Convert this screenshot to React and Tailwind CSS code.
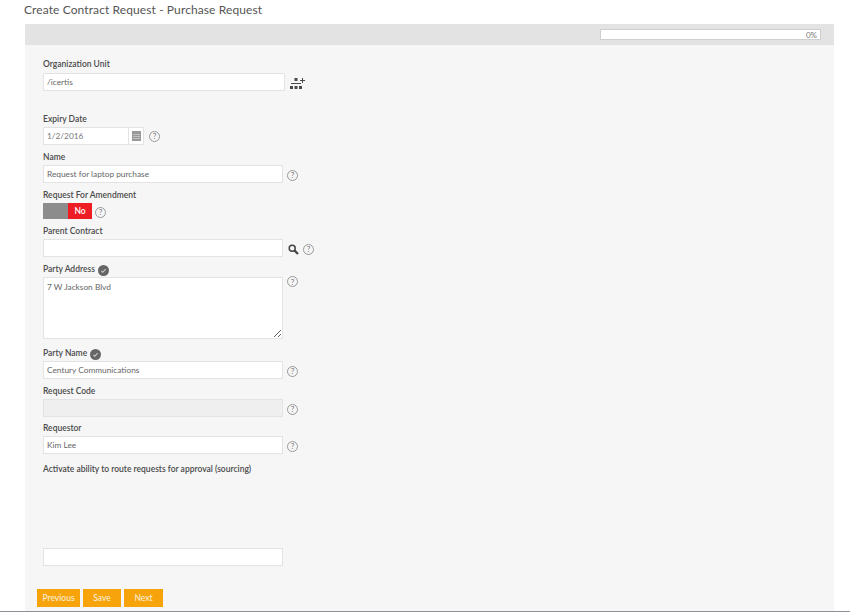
function Help({ className = 'mt-[2px]' }) {
  return (
    <span className={`flex h-[11px] w-[11px] shrink-0 items-center justify-center rounded-full border border-[#999] text-[8px] leading-none text-[#777] ${className}`}>
      ?
    </span>
  )
}

function Check() {
  return (
    <svg width="11" height="11" viewBox="0 0 11 11" className="ml-[3px] mt-[2px] shrink-0">
      <circle cx="5.5" cy="5.5" r="5.5" fill="#666" />
      <path d="M3.4 6l1.4 1.3 2.8-3.2" fill="none" stroke="#ccc" strokeWidth="1.1" />
    </svg>
  )
}

function Label({ children, check }) {
  return (
    <div className="flex h-4 items-center text-[8.5px] font-semibold text-[#4a4a4a]">
      {children}
      {check && <Check />}
    </div>
  )
}

function TextBox({ value = '', disabled, className = 'w-[240px]' }) {
  return (
    <input
      readOnly
      value={value}
      className={`block h-[18px] border border-[#e3e3e3] px-[3px] text-[8.3px] text-[#666] outline-none ${disabled ? 'bg-[#efefef]' : 'bg-white'} ${className}`}
    />
  )
}

function Row({ children, className = 'gap-1' }) {
  return <div className={`flex items-center ${className}`}>{children}</div>
}

function OrgIcon() {
  return (
    <svg width="15" height="13" viewBox="0 0 15 13" className="mt-[2px]">
      <g fill="#4a4a4a">
        <rect x="4.5" y="1" width="3" height="3" />
        <rect x="0" y="9" width="3" height="3" />
        <rect x="4.5" y="9" width="3" height="3" />
        <rect x="9" y="9" width="3" height="3" />
        <rect x="1" y="6" width="10" height="1" />
        <rect x="10" y="3" width="5" height="1" />
        <rect x="12" y="1" width="1" height="5" />
      </g>
    </svg>
  )
}

function CalendarIcon() {
  return (
    <svg width="9" height="10" viewBox="0 0 9 10">
      <rect width="9" height="10" fill="#999" />
      <path d="M1 3.5h7M1 5.5h7M1 7.5h7" stroke="#ccc" strokeWidth="0.8" />
    </svg>
  )
}

function SearchIcon() {
  return (
    <svg width="11" height="11" viewBox="0 0 11 11">
      <circle cx="4.2" cy="4.2" r="3" fill="none" stroke="#444" strokeWidth="1.5" />
      <path d="M6.4 6.4L10 10" stroke="#444" strokeWidth="2.2" />
    </svg>
  )
}

function ActionButton({ children, className }) {
  return (
    <button className={`h-[18px] bg-[#f7a30c] text-[8.5px] font-medium text-[#fbeed6] ${className}`}>
      {children}
    </button>
  )
}

export default function App() {
  return (
    <div className="flex h-[612px] w-[850px] flex-col overflow-hidden bg-white font-['Lato',sans-serif]">
      {/* Title */}
      <div className="flex h-6 shrink-0 items-start pl-6 pt-[2px] text-[12px] leading-[16px] tracking-[0.1px] text-[#555]">
        Create Contract Request - Purchase Request
      </div>

      {/* Panel */}
      <div className="ml-[25px] flex w-[809px] flex-1 flex-col bg-[#f6f6f6]">
        <div className="flex h-[21px] shrink-0 items-center justify-end bg-[#e4e3e3] pr-[13px]">
          <div className="flex h-[11px] w-[221px] items-center justify-end border border-[#cfcfcf] bg-white pr-[3px] text-[8px] text-[#777]">
            0%
          </div>
        </div>

        <div className="flex flex-col pl-[18px] pt-[11px]">
          <Label>Organization Unit</Label>
          <div className="mt-[1px] flex items-center gap-[5px]">
            <TextBox value="/icertis" className="w-[242px]" />
            <OrgIcon />
          </div>

          <div className="mt-5">
            <Label>Expiry Date</Label>
            <Row className="gap-[5px]">
              <div className="flex h-[18px] w-[101px] border border-[#e3e3e3] bg-white">
                <input readOnly value="1/2/2016" className="w-[85px] border-r border-[#e3e3e3] px-[3px] text-[8.3px] text-[#777] outline-none" />
                <div className="flex flex-1 items-center justify-center">
                  <CalendarIcon />
                </div>
              </div>
              <Help className="" />
            </Row>
          </div>

          <div className="mt-1">
            <Label>Name</Label>
            <Row>
              <TextBox value="Request for laptop purchase" />
              <Help />
            </Row>
          </div>

          <div className="mt-1">
            <Label>Request For Amendment</Label>
            <Row className="gap-[3px]">
              <div className="flex h-4 w-[49px]">
                <div className="w-[25px] bg-[#8c8c8c]" />
                <div className="flex flex-1 items-center justify-center bg-[#ee1c25] text-[8.5px] font-semibold text-white">No</div>
              </div>
              <Help />
            </Row>
          </div>

          <div className="mt-1">
            <Label>Parent Contract</Label>
            <Row className="gap-0">
              <TextBox />
              <span className="ml-[5px] mt-[3px] flex"><SearchIcon /></span>
              <Help className="ml-[4px] mt-[2px]" />
            </Row>
          </div>

          <div className="mt-1">
            <Label check>Party Address</Label>
            <div className="flex items-start gap-1">
              <textarea
                readOnly
                value="7 W Jackson Blvd"
                className="block h-[62px] w-[240px] border border-[#e3e3e3] bg-white px-[3px] py-[3px] text-[8.3px] text-[#666] outline-none"
              />
              <Help className="mt-[-1px]" />
            </div>
          </div>

          <div className="mt-[6px]">
            <Label check>Party Name</Label>
            <Row>
              <TextBox value="Century Communications" />
              <Help />
            </Row>
          </div>

          <div className="mt-1">
            <Label>Request Code</Label>
            <Row>
              <TextBox disabled />
              <Help />
            </Row>
          </div>

          <div className="mt-[3px]">
            <Label>Requestor</Label>
            <Row>
              <TextBox value="Kim Lee" />
              <Help />
            </Row>
          </div>

          <div className="mt-[7px]">
            <Label>Activate ability to route requests for approval (sourcing)</Label>
          </div>

          <div className="mt-[71px]">
            <TextBox />
          </div>
        </div>

        <div className="mt-[23px] flex gap-[3px] pl-3">
          <ActionButton className="w-[43px]">Previous</ActionButton>
          <ActionButton className="w-[38px]">Save</ActionButton>
          <ActionButton className="w-[39px]">Next</ActionButton>
        </div>
      </div>

      <div className="h-[1px] shrink-0 bg-[#8b9097]" />
    </div>
  )
}
